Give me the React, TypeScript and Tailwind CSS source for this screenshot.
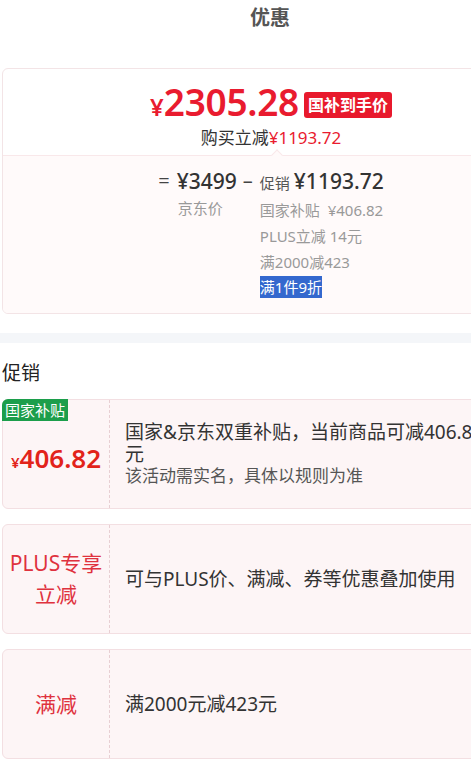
const FONT = "font-['Noto_Sans','Noto_Sans_CJK_SC',sans-serif]";

const PROMOS = [
    {
        key: 'plus',
        label: ['PLUS专享', '立减'],
        desc: '可与PLUS价、满减、券等优惠叠加使用',
    },
    {
        key: 'mj',
        label: ['满减'],
        desc: '满2000元减423元',
    },
];

function PromoCard({ left, children }: { left: React.ReactNode; children: React.ReactNode }) {
    return (
        <div className="flex h-[110px] rounded-md border border-[#f3dfe2] bg-[#fdf5f6]">
            <div className="relative flex w-[107px] shrink-0 flex-col items-center justify-center border-r border-dashed border-[#e8cfd3]">
                {left}
            </div>
            <div className="flex flex-1 flex-col justify-center pl-[15px]">{children}</div>
        </div>
    );
}

export default function App() {
    return (
        <div className={`w-[471px] overflow-hidden bg-white ${FONT}`}>
            <div className="w-[540px] pb-[19px]">
                {/* header */}
                <div className="h-[68px] pt-[4px] text-center text-[20px] font-bold leading-[28px] text-[#555]">优惠</div>

                {/* price summary */}
                <div className="ml-[2px] overflow-hidden rounded-md border border-[#f3e4e6]">
                    <div className="flex h-[86px] flex-col items-center pt-[15px]">
                        <div className="flex items-center gap-[5px]">
                            <div className="flex items-baseline font-semibold text-[#e91b2f]">
                                <span className="text-[24px] leading-[36px]">¥</span>
                                <span className="text-[37px] leading-[36px] tracking-[-0.3px]">2305.28</span>
                            </div>
                            <span className="rounded-[3px] bg-[#e8192c] px-[4px] text-[16px] font-bold leading-[26px] text-white">国补到手价</span>
                        </div>
                        <div className="mt-[2px] text-[17px] leading-[22px] text-[#333]">
                            购买立减<span className="text-[#e91b2f]">¥1193.72</span>
                        </div>
                    </div>

                    <div className="relative h-[158px] border-t border-[#f9e8ea] bg-[#fffafa] pt-[11px]">
                        <div className="absolute -top-[5px] left-[270px] h-[8px] w-[8px] rotate-45 border-l border-t border-[#f9e8ea] bg-[#fffafa]" />
                        <div className="flex justify-center">
                            <span className="text-[20px] leading-[28px] text-[#444]">=</span>
                            <div className="ml-[7px] flex flex-col">
                                <span className="text-[21px] font-medium leading-[28px] text-[#333]">¥3499</span>
                                <span className="pl-[1px] text-[15px] leading-[26px] text-[#999]">京东价</span>
                            </div>
                            <span className="ml-[6px] text-[20px] leading-[28px] text-[#444]">–</span>
                            <div className="ml-[7px] flex flex-col text-[15px] leading-[26px] text-[#999]">
                                <div className="flex items-baseline leading-[28px]">
                                    <span className="text-[15px] text-[#555]">促销</span>
                                    <span className="ml-[4px] text-[21px] font-medium text-[#333]">¥1193.72</span>
                                </div>
                                <span>国家补贴&nbsp;&nbsp;¥406.82</span>
                                <span>PLUS立减 14元</span>
                                <span>满2000减423</span>
                                <span className="mt-[1px] w-fit bg-[#3468ce] leading-[22px] text-white">满1件9折</span>
                            </div>
                        </div>
                    </div>
                </div>

                <div className="mt-[19px] h-[10px] bg-[#f4f6f9]" />

                <div className="px-[2px] pt-[18px] text-[19px] leading-[24px] text-[#222]">促销</div>

                <div className="mt-[14px] ml-[2px] flex flex-col gap-[15px]">
                    <PromoCard
                        left={
                            <>
                                <span className="absolute -left-px -top-px rounded-tl-md bg-[#1c9e4b] px-[3px] text-[15px] leading-[22px] text-white">国家补贴</span>
                                <div className="mt-[8px] flex items-baseline font-semibold text-[#e2231a]">
                                    <span className="text-[15px]">¥</span>
                                    <span className="text-[26px] leading-[32px]">406.82</span>
                                </div>
                            </>
                        }
                    >
                        <p className="w-[368px] text-[19px] leading-[22px] text-[#333]">国家&amp;京东双重补贴，当前商品可减406.82元</p>
                        <p className="text-[17px] leading-[22px] text-[#555]">该活动需实名，具体以规则为准</p>
                    </PromoCard>

                    {PROMOS.map((p) => (
                        <PromoCard
                            key={p.key}
                            left={
                                <div className="text-center text-[21px] leading-[31px] text-[#df323e]">
                                    {p.label.map((l) => (
                                        <div key={l}>{l}</div>
                                    ))}
                                </div>
                            }
                        >
                            <p className="text-[19px] leading-[22px] text-[#333]">{p.desc}</p>
                        </PromoCard>
                    ))}
                </div>
            </div>
        </div>
    );
}
